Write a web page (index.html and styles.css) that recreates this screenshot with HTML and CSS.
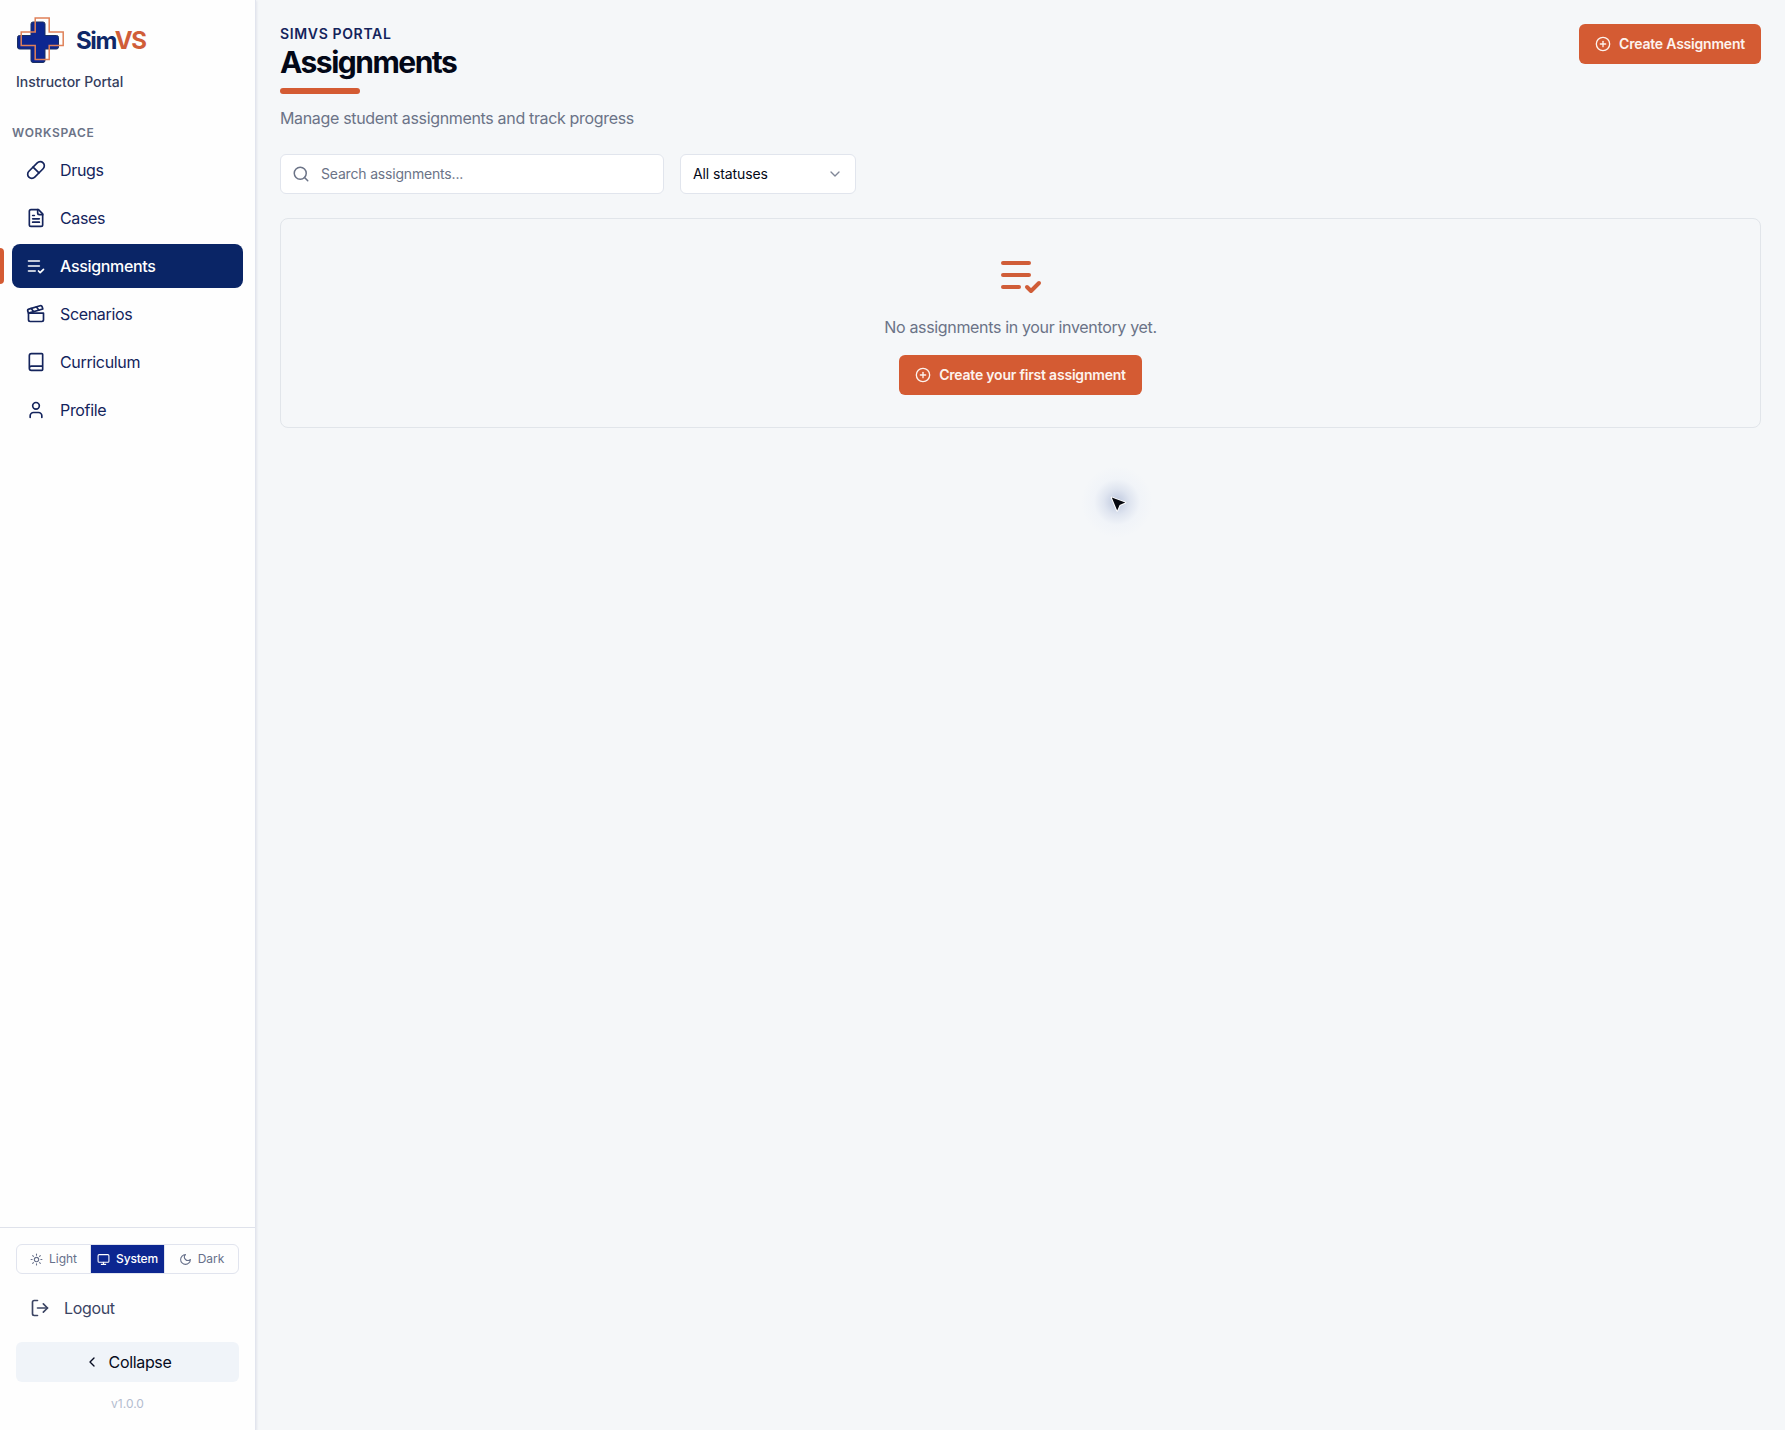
FILE: index.html
```html
<!DOCTYPE html>
<html lang="en">
<head>
    <meta charset="UTF-8">
    <meta name="viewport" content="width=device-width, initial-scale=1.0">
    <title>Assignments - SimVS</title>
    <link rel="stylesheet" href="styles.css">
</head>
<body>
<aside class="sidebar">
    <div class="brand">
        <div class="brand-row">
            <svg class="logo" viewBox="0 0 48 48" width="48" height="48">
                <path class="logo-fill" d="M17 6h10a2 2 0 0 1 2 2v11.500h11.500a2 2 0 0 1 2 2v9.500a2 2 0 0 1-2 2h-11.500v11.500a2 2 0 0 1-2 2h-10a2 2 0 0 1-2-2v-11.500h-11.500a2 2 0 0 1-2-2v-9.500a2 2 0 0 1 2-2h11.500v-11.500a2 2 0 0 1 2-2z"/>
                <path class="logo-line" d="M19.200 1.900h14v14h14v13.500h-14v14h-14v-14h-14v-13.500h14z"/>
            </svg>
            <span class="brand-name">Sim<span>VS</span></span>
        </div>
        <p class="brand-sub">Instructor Portal</p>
    </div>
    <nav class="nav">
        <h2>WORKSPACE</h2>
        <a class="nav-item" href="#">
            <svg class="icon" viewBox="0 0 24 24"><path d="m10.500 20.500 10-10a4.950 4.950 0 1 0-7-7l-10 10a4.950 4.950 0 1 0 7 7Z"/><path d="m8.500 8.500 7 7"/></svg>
            Drugs
        </a>
        <a class="nav-item" href="#">
            <svg class="icon" viewBox="0 0 24 24"><path d="M15 2H6a2 2 0 0 0-2 2v16a2 2 0 0 0 2 2h12a2 2 0 0 0 2-2V7Z"/><path d="M14 2v4a2 2 0 0 0 2 2h4"/><path d="M10 9H8"/><path d="M16 13H8"/><path d="M16 17H8"/></svg>
            Cases
        </a>
        <a class="nav-item active" href="#">
            <svg class="icon" viewBox="0 0 24 24"><path d="M11 18H3"/><path d="m15 18 2 2 4-4"/><path d="M16 12H3"/><path d="M16 6H3"/></svg>
            Assignments
        </a>
        <a class="nav-item" href="#">
            <svg class="icon" viewBox="0 0 24 24"><path d="M20.200 6 3 11l-.9-2.400c-.3-1.100.3-2.200 1.300-2.500l13.500-4c1.100-.3 2.200.3 2.500 1.300Z"/><path d="m6.200 5.300 3.100 3.900"/><path d="m12.400 3.400 3.100 4"/><path d="M3 11h18v8a2 2 0 0 1-2 2H5a2 2 0 0 1-2-2Z"/></svg>
            Scenarios
        </a>
        <a class="nav-item" href="#">
            <svg class="icon" viewBox="0 0 24 24"><path d="M4 19.500v-15A2.500 2.500 0 0 1 6.500 2H19a1 1 0 0 1 1 1v18a1 1 0 0 1-1 1H6.500a1 1 0 0 1 0-5H20"/></svg>
            Curriculum
        </a>
        <a class="nav-item" href="#">
            <svg class="icon" viewBox="0 0 24 24"><path d="M19 21v-2a4 4 0 0 0-4-4H9a4 4 0 0 0-4 4v2"/><circle cx="12" cy="7" r="4"/></svg>
            Profile
        </a>
    </nav>
    <div class="sidebar-footer">
        <div class="theme-switch">
            <button>
                <svg class="icon" viewBox="0 0 24 24"><circle cx="12" cy="12" r="4"/><path d="M12 2v2"/><path d="M12 20v2"/><path d="m4.930 4.930 1.410 1.410"/><path d="m17.660 17.660 1.410 1.410"/><path d="M2 12h2"/><path d="M20 12h2"/><path d="m6.340 17.660-1.410 1.410"/><path d="m19.070 4.930-1.410 1.410"/></svg>
                Light
            </button>
            <button class="selected">
                <svg class="icon" viewBox="0 0 24 24"><rect width="20" height="14" x="2" y="3" rx="2"/><path d="M8 21h8"/><path d="M12 17v4"/></svg>
                System
            </button>
            <button>
                <svg class="icon" viewBox="0 0 24 24"><path d="M12 3a6 6 0 0 0 9 9 9 9 0 1 1-9-9Z"/></svg>
                Dark
            </button>
        </div>
        <a class="logout" href="#">
            <svg class="icon" viewBox="0 0 24 24"><path d="M9 21H5a2 2 0 0 1-2-2V5a2 2 0 0 1 2-2h4"/><path d="m16 17 5-5-5-5"/><path d="M21 12H9"/></svg>
            Logout
        </a>
        <button class="collapse">
            <svg class="icon" viewBox="0 0 24 24"><path d="m15 18-6-6 6-6"/></svg>
            Collapse
        </button>
        <p class="version">v1.0.0</p>
    </div>
</aside>
<main class="content">
    <header class="page-header">
        <div>
            <p class="eyebrow">SIMVS PORTAL</p>
            <h1>Assignments</h1>
            <div class="accent"></div>
            <p class="lead">Manage student assignments and track progress</p>
        </div>
        <button class="btn">
            <svg class="icon" viewBox="0 0 24 24"><circle cx="12" cy="12" r="10"/><path d="M8 12h8"/><path d="M12 8v8"/></svg>
            Create Assignment
        </button>
    </header>
    <div class="filters">
        <label class="search">
            <svg class="icon" viewBox="0 0 24 24"><circle cx="11" cy="11" r="8"/><path d="m21 21-4.300-4.300"/></svg>
            <input type="text" placeholder="Search assignments...">
        </label>
        <button class="select">
            All statuses
            <svg class="icon" viewBox="0 0 24 24"><path d="m6 9 6 6 6-6"/></svg>
        </button>
    </div>
    <section class="empty">
        <svg class="icon" viewBox="0 0 24 24"><path d="M11 18H3"/><path d="m15 18 2 2 4-4"/><path d="M16 12H3"/><path d="M16 6H3"/></svg>
        <p>No assignments in your inventory yet.</p>
        <button class="btn">
            <svg class="icon" viewBox="0 0 24 24"><circle cx="12" cy="12" r="10"/><path d="M8 12h8"/><path d="M12 8v8"/></svg>
            Create your first assignment
        </button>
    </section>
</main>
<div class="pointer">
    <svg viewBox="0 0 20 20" width="20" height="20"><path d="M4.800 5.600 18.300 10.600 12.600 13 10.200 18.600Z"/></svg>
</div>
</body>
</html>
```
FILE: styles.css
```css
* { box-sizing: border-box; }
body { margin: 0; display: flex; height: 100vh; overflow: hidden; font-family: Inter, "Liberation Sans", sans-serif; font-size: 16px; line-height: 24px; letter-spacing: -0.34px; color: #030817; background: #f5f7f9; }
h1, h2, p { margin: 0; }
a { color: inherit; text-decoration: none; }
button { font: inherit; letter-spacing: inherit; color: inherit; border: none; background: none; padding: 0; margin: 0; }
.icon { width: 20px; height: 20px; flex: none; fill: none; stroke: currentColor; stroke-width: 2; stroke-linecap: round; stroke-linejoin: round; }

/* sidebar */
.sidebar { width: 256px; flex: none; display: flex; flex-direction: column; background: #fefefe; border-right: 1px solid #e2e5ee; box-shadow: 1px 1px 2px rgba(20,30,90,0.08); color: #14245c; }
.brand { padding: 16px 16px 0; }
.brand-row { display: flex; align-items: center; gap: 12px; }
.logo { display: block; }
.logo-fill { fill: #0c2690; stroke: #1b2f62; stroke-width: 1; }
.logo-line { fill: none; stroke: #df8058; stroke-width: 1.5; }
.brand-name { padding-top: 2px; font-size: 24px; line-height: 32px; font-weight: 700; letter-spacing: -1.4px; color: #0f2868; }
.brand-name span { color: #d05d38; }
.brand-sub { margin-top: 8px; font-size: 14px; line-height: 20px; font-weight: 500; letter-spacing: -0.05px; color: #353e5e; }
.nav { flex: 1; padding: 33px 12px 0; display: flex; flex-direction: column; gap: 4px; }
.nav h2 { margin-bottom: 3px; font-size: 12px; line-height: 16px; font-weight: 600; letter-spacing: 0.66px; color: #6b7387; }
.nav-item { position: relative; display: flex; align-items: center; gap: 14px; height: 44px; padding: 0 14px; border-radius: 8px; }
.nav-item.active { background: #0a2566; color: #fff; font-weight: 500; }
.nav-item.active::before { content: ""; position: absolute; left: -12px; top: 4px; width: 4px; height: 36px; border-radius: 0 4px 4px 0; background: #d45b33; }
.sidebar-footer { border-top: 1px solid #dfe2eb; padding: 16px 16px 18px; }
.theme-switch { display: flex; height: 30px; border: 1px solid #e1e4ee; border-radius: 6px; overflow: hidden; }
.theme-switch button { flex: 1; display: flex; align-items: center; justify-content: center; gap: 6px; font-size: 12px; line-height: 16px; letter-spacing: 0; color: #67708a; }
.theme-switch button + button { border-left: 1px solid #e1e4ee; }
.theme-switch .icon { width: 13px; height: 13px; }
.theme-switch .selected { background: #0c2690; color: #fff; font-weight: 500; letter-spacing: -0.15px; }
.logout { display: flex; align-items: center; gap: 14px; height: 44px; margin-top: 12px; padding: 0 14px; color: #3b4463; }
.collapse { display: flex; align-items: center; justify-content: center; gap: 9px; width: 100%; height: 40px; margin-top: 12px; border-radius: 6px; background: #f0f4f9; color: #060b20; }
.collapse .icon { width: 16px; height: 16px; }
.version { margin-top: 14px; font-size: 12px; line-height: 16px; letter-spacing: 0; text-align: center; color: #b3bccf; }

/* main */
.content { flex: 1; padding: 24px; }
.page-header { display: flex; align-items: flex-start; justify-content: space-between; }
.eyebrow { font-size: 14px; line-height: 20px; font-weight: 600; letter-spacing: 0.64px; color: #14245c; }
h1 { font-size: 30px; line-height: 36px; font-weight: 700; letter-spacing: -1.5px; }
.accent { width: 80px; height: 6px; margin: 8px 0 12px; border-radius: 3px; background: #d45b33; }
.lead { color: #6b7387; }
.btn { display: flex; align-items: center; gap: 8px; height: 40px; padding: 0 16px; border-radius: 6px; background: #d45b33; color: #fdf3ee; font-size: 14px; line-height: 20px; font-weight: 600; letter-spacing: -0.21px; }
.btn .icon { width: 16px; height: 16px; }
.filters { display: flex; gap: 16px; margin: 24px 0; }
.search, .select { display: flex; align-items: center; height: 40px; border: 1px solid #e1e5ed; border-radius: 6px; background: #fff; font-size: 14px; line-height: 20px; }
.search { width: 384px; gap: 11px; padding: 0 11px; color: #6b7387; }
.search .icon { width: 18px; height: 18px; }
.search input { flex: 1; min-width: 0; padding: 0; border: none; outline: none; background: none; font: inherit; letter-spacing: -0.18px; }
.search input::placeholder { color: #6b7387; opacity: 1; }
.select { width: 176px; justify-content: space-between; padding: 0 12px; letter-spacing: -0.1px; }
.select .icon { width: 16px; height: 16px; color: #808797; }
.empty { display: flex; flex-direction: column; align-items: center; gap: 16px; padding: 32px; border: 1px solid #e1e5ea; border-radius: 8px; color: #6b7387; }
.empty > .icon { width: 48px; height: 48px; color: #d05d38; }

/* mouse pointer with glow */
.pointer { position: absolute; left: 1077px; top: 462px; width: 80px; height: 80px; display: flex; align-items: center; justify-content: center; background: radial-gradient(circle, rgba(60,90,160,0.3) 0, rgba(80,110,180,0.13) 13px, rgba(110,150,230,0.03) 23px, transparent 36px); pointer-events: none; }
.pointer path { fill: #05070f; stroke: #fff; stroke-width: 2; stroke-linejoin: round; paint-order: stroke; }
```
